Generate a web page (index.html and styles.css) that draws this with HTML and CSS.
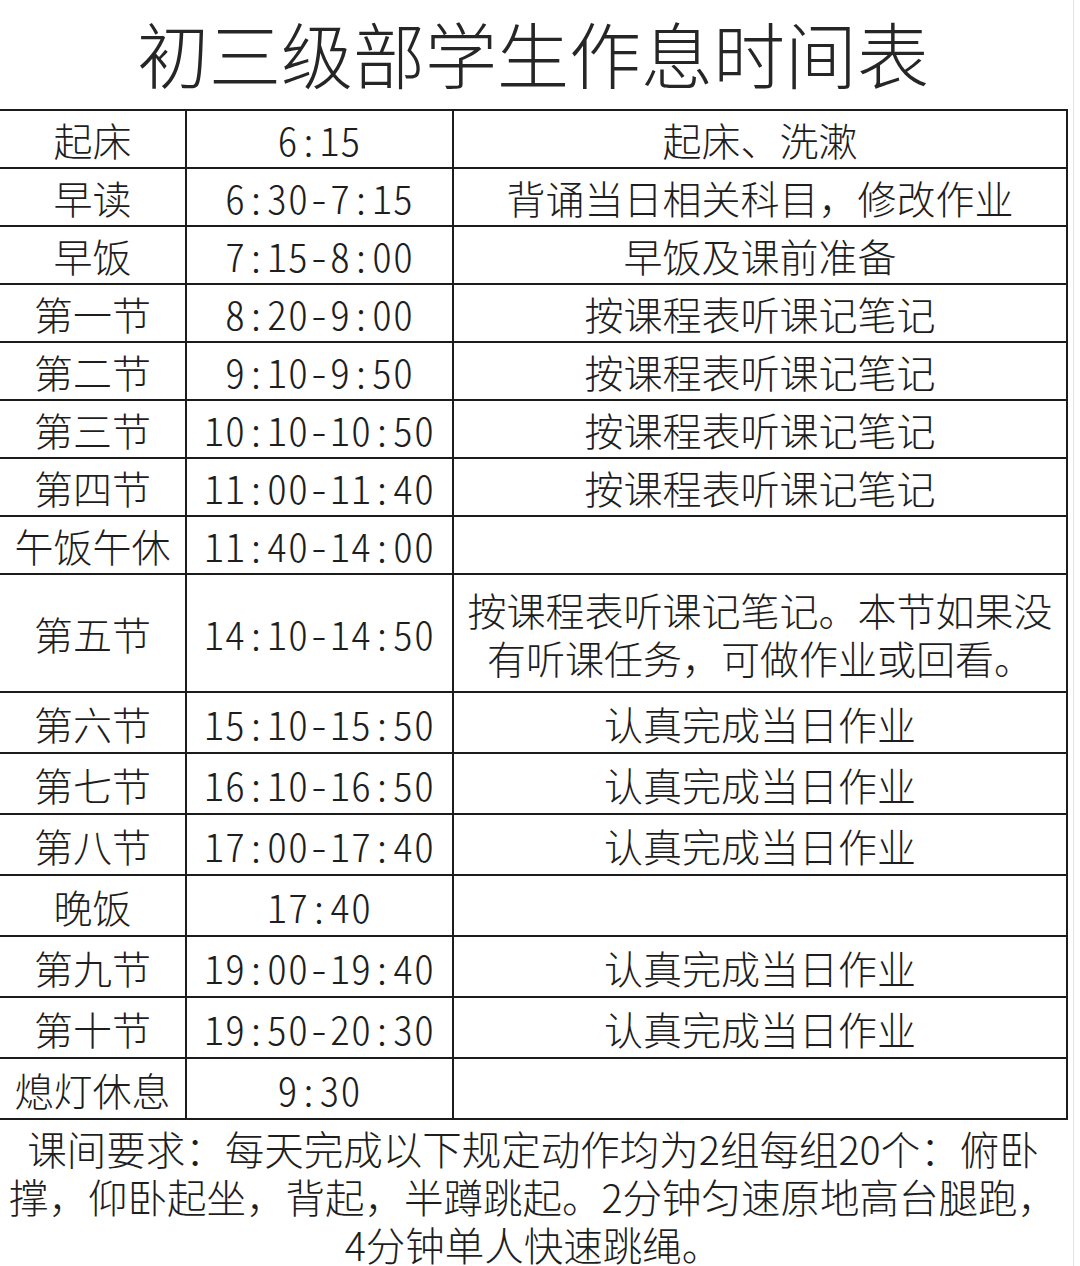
FILE: index.html
```html
<!DOCTYPE html>
<html lang="zh-CN">
<head>
<meta charset="utf-8">
<title>初三级部学生作息时间表</title>
<link rel="stylesheet" href="styles.css">
</head>
<body>
<div class="sheet">
  <h1 class="title">初三级部学生作息时间表</h1>
  <table class="schedule">
    <colgroup>
      <col class="c-name">
      <col class="c-time">
      <col class="c-task">
    </colgroup>
    <tbody>
      <tr class="r-a"><td>起床</td><td class="time">6:15</td><td>起床、洗漱</td></tr>
      <tr class="r-a"><td>早读</td><td class="time">6:30-7:15</td><td>背诵当日相关科目，修改作业</td></tr>
      <tr class="r-a"><td>早饭</td><td class="time">7:15-8:00</td><td>早饭及课前准备</td></tr>
      <tr class="r-a"><td>第一节</td><td class="time">8:20-9:00</td><td>按课程表听课记笔记</td></tr>
      <tr class="r-a"><td>第二节</td><td class="time">9:10-9:50</td><td>按课程表听课记笔记</td></tr>
      <tr class="r-a"><td>第三节</td><td class="time">10:10-10:50</td><td>按课程表听课记笔记</td></tr>
      <tr class="r-a"><td>第四节</td><td class="time">11:00-11:40</td><td>按课程表听课记笔记</td></tr>
      <tr class="r-a"><td>午饭午休</td><td class="time">11:40-14:00</td><td></td></tr>
      <tr class="r-tall"><td>第五节</td><td class="time">14:10-14:50</td><td class="wrap">按课程表听课记笔记。本节如果没有听课任务，可做作业或回看。</td></tr>
      <tr class="r-b"><td>第六节</td><td class="time">15:10-15:50</td><td>认真完成当日作业</td></tr>
      <tr class="r-b"><td>第七节</td><td class="time">16:10-16:50</td><td>认真完成当日作业</td></tr>
      <tr class="r-b"><td>第八节</td><td class="time">17:00-17:40</td><td>认真完成当日作业</td></tr>
      <tr class="r-b"><td>晚饭</td><td class="time">17:40</td><td></td></tr>
      <tr class="r-b"><td>第九节</td><td class="time">19:00-19:40</td><td>认真完成当日作业</td></tr>
      <tr class="r-b"><td>第十节</td><td class="time">19:50-20:30</td><td>认真完成当日作业</td></tr>
      <tr class="r-b"><td>熄灯休息</td><td class="time">9:30</td><td></td></tr>
    </tbody>
  </table>
  <p class="note">课间要求：每天完成以下规定动作均为2组每组20个：俯卧<br>撑，仰卧起坐，背起，半蹲跳起。2分钟匀速原地高台腿跑，<br>4分钟单人快速跳绳。</p>
</div>
</body>
</html>
```

FILE: styles.css
```css
html, body {
  margin: 0;
  padding: 0;
  background: #ffffff;
}

body {
  font-family: "Noto Sans CJK SC", "Noto Sans", sans-serif;
  font-weight: 300;
  color: #1e1e1e;
  overflow: hidden;
}

.sheet {
  width: 1073px;
  height: 1266px;
  border-right: 1px solid #e3e3e3;
  display: flex;
  flex-direction: column;
  overflow: hidden;
}

.title {
  margin: 0;
  flex: none;
  height: 109px;
  width: 1066px;
  display: flex;
  align-items: center;
  justify-content: center;
  font-size: 72px;
  font-weight: 300;
  line-height: 1;
  color: #262626;
  padding-bottom: 5px;
  box-sizing: border-box;
}

.schedule {
  flex: none;
  border-collapse: collapse;
  table-layout: fixed;
  width: 1067px;
  font-size: 39px;
  line-height: 48px;
}

.c-name { width: 186px; }
.c-time { width: 267px; }
.c-task { width: 614px; }

.schedule td {
  border: 2px solid #1c1c1c;
  padding: 0;
  text-align: center;
  vertical-align: middle;
  white-space: nowrap;
}

.schedule td:first-child {
  border-left: none;
}

.r-a { height: 58px; }
.r-tall { height: 118px; }
.r-b { height: 61px; }

.schedule td.time {
  font-feature-settings: "hwid" 1;
  letter-spacing: 1px;
  font-size: 40px;
}

.schedule td.wrap {
  white-space: normal;
  padding: 0 4px;
}

.note {
  flex: none;
  margin: 0;
  width: 1066px;
  padding-top: 4px;
  font-size: 39.5px;
  line-height: 48px;
  text-align: center;
  white-space: nowrap;
  color: #1e1e1e;
}
```
